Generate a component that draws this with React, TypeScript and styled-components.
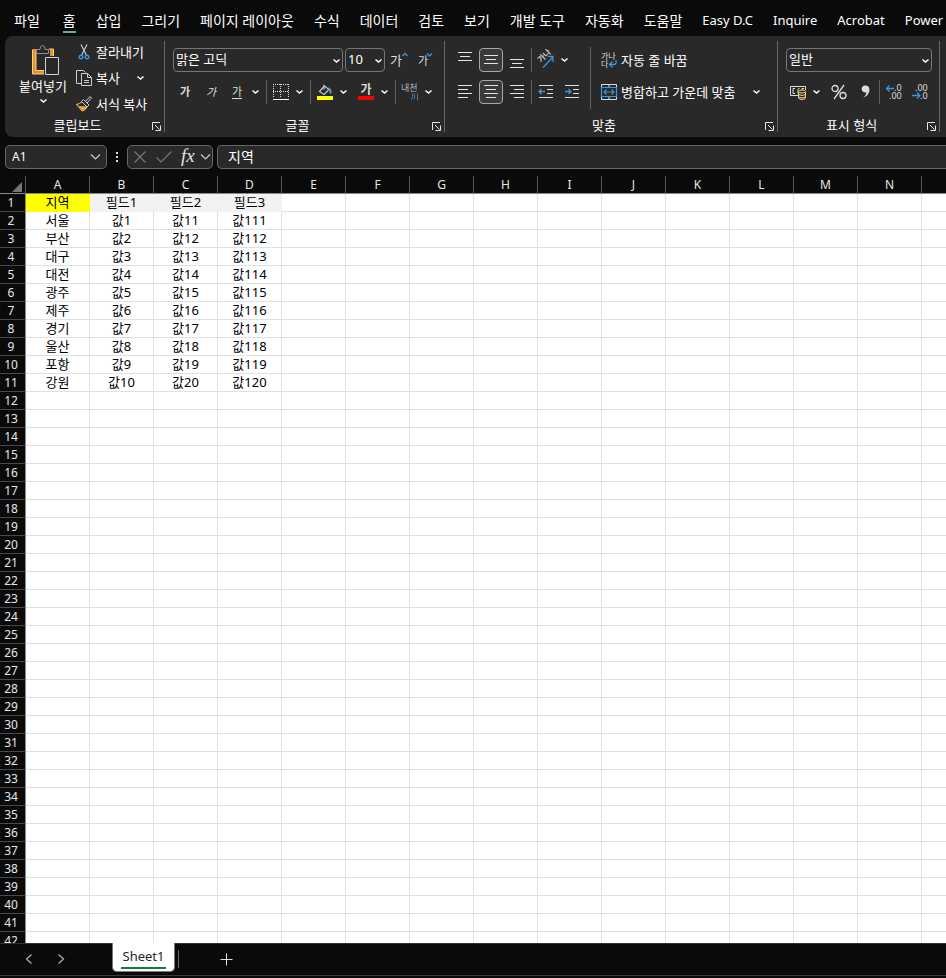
import React from "react";
import styled, { createGlobalStyle, css } from "styled-components";

const latin = '"Noto Sans", "Noto Sans CJK KR", sans-serif';

const GlobalStyle = createGlobalStyle`
  * { box-sizing: border-box; }
  body { margin: 0; background: #0a0a0a; }
  button, input, select { font: inherit; color: inherit; margin: 0; }
  svg { flex: none; overflow: visible; }
`;

const Window = styled.div`
  display: flex;
  flex-direction: column;
  height: 100vh;
  overflow: hidden;
  background: #0a0a0a;
  color: #fff;
  font-family: ${latin};
  font-size: 13px;
  line-height: 18px;
`;

/* ---------- Menu tabs ---------- */

const MenuBar = styled.nav`
  display: flex;
  flex: none;
  gap: 20px;
  height: 36px;
  padding: 10px 0 0 14px;
  overflow: hidden;
`;

const MenuTab = styled.button<{ $active?: boolean; $file?: boolean }>`
  flex: none;
  height: 23px;
  padding: 0;
  border: 0;
  border-bottom: 2px solid ${(p) => (p.$active ? "#5fb878" : "transparent")};
  background: none;
  font-size: ${(p) => (p.lang === "en" ? 13 : 14)}px;
  line-height: 21px;
  white-space: nowrap;
  margin-right: ${(p) => (p.$file ? 3 : 0)}px;
`;

/* ---------- Ribbon ---------- */

const Ribbon = styled.div`
  display: flex;
  flex: none;
  height: 101px;
  margin-left: 5px;
  padding: 5px 0;
  border-radius: 8px 0 0 8px;
  background: #292929;
`;

const Group = styled.section<{ $width: number }>`
  display: flex;
  flex: none;
  flex-direction: column;
  justify-content: space-between;
  width: ${(p) => p.$width}px;
  height: 91px;
  border-right: 1px solid #666;
`;

const GroupBody = styled.div<{ $left?: number }>`
  display: flex;
  padding-left: ${(p) => p.$left ?? 8}px;
`;

const GroupFooter = styled.footer`
  display: grid;
  grid-template-columns: 1fr 14px;
  align-items: center;
  height: 14px;
  font-size: 13px;
  line-height: 14px;
  text-align: center;
`;

const LaunchButton = styled.button`
  display: flex;
  padding: 3px 0 0 2px;
  border: 0;
  background: none;
`;

const Stack = styled.div<{ $top?: number; $gap?: number }>`
  display: flex;
  flex-direction: column;
  gap: ${(p) => p.$gap ?? 8}px;
  padding-top: ${(p) => p.$top ?? 7}px;
`;

const Tools = styled.div<{ $gap?: number; $height?: number }>`
  display: flex;
  align-items: center;
  gap: ${(p) => p.$gap ?? 0}px;
  height: ${(p) => p.$height ?? 24}px;
`;

const IconButton = styled.button<{ $pressed?: boolean }>`
  display: flex;
  flex: none;
  align-items: center;
  justify-content: center;
  width: 24px;
  height: 24px;
  padding: 0;
  border: 1px solid ${(p) => (p.$pressed ? "#a8a8a8" : "transparent")};
  border-radius: 4px;
  background: ${(p) => (p.$pressed ? "#3a3a3a" : "none")};
  color: #dcdcdc;
`;

const GlyphButton = styled(IconButton)<{ $kind?: "bold" | "italic" | "underline" }>`
  font-size: 11px;
  line-height: 14px;
  ${(p) => p.$kind === "bold" && css`font-weight: 700;`}
  ${(p) => p.$kind === "italic" && css`font-style: italic;`}
`;

const Underlined = styled.span`
  border-bottom: 1px solid #dcdcdc;
  line-height: 13px;
`;

const DropButton = styled.button<{ $width?: number }>`
  display: flex;
  flex: none;
  align-items: center;
  justify-content: center;
  width: ${(p) => p.$width ?? 12}px;
  height: 24px;
  padding: 0;
  border: 0;
  background: none;
`;

const Divider = styled.span<{ $left?: number; $right?: number; $height?: number }>`
  flex: none;
  width: 1px;
  height: ${(p) => p.$height ?? 24}px;
  margin: 0 ${(p) => p.$right ?? 2}px 0 ${(p) => p.$left ?? 5}px;
  background: #606060;
`;

const Spacer = styled.span`
  flex: none;
  width: 5px;
`;

const TextButton = styled.button<{ $height?: number }>`
  display: flex;
  align-items: center;
  gap: 4px;
  height: ${(p) => p.$height ?? 24}px;
  padding: 0;
  border: 0;
  background: none;
  font-size: 13px;
  white-space: nowrap;
`;

const PasteButton = styled.button`
  display: flex;
  flex-direction: column;
  align-items: center;
  width: 54px;
  margin-right: 6px;
  padding: 4px 0 0;
  border: 0;
  background: none;
  line-height: 20px;
  white-space: nowrap;
`;

const SelectFrame = styled.label<{ $width: number }>`
  position: relative;
  display: flex;
  width: ${(p) => p.$width}px;
  height: 24px;
  border: 1px solid #757575;
  border-radius: 4px;

  select {
    width: 100%;
    padding: 0 16px 2px 2px;
    border: 0;
    outline: 0;
    appearance: none;
    background: none;
    font-size: 13px;
  }
  svg {
    position: absolute;
    right: 2px;
    top: 9px;
    pointer-events: none;
  }
`;

/* ---------- Formula bar ---------- */

const FormulaBar = styled.div`
  display: flex;
  flex: none;
  height: 39px;
  padding: 8px 0 7px 5px;
`;

const Box = styled.div<{ $width?: number }>`
  display: flex;
  align-items: center;
  flex: none;
  width: ${(p) => p.$width}px;
  height: 24px;
  border: 1px solid #666;
  border-radius: 5px;
  background: #292929;

  input {
    flex: 1;
    min-width: 0;
    height: 22px;
    padding: 0 0 1px 6px;
    border: 0;
    outline: 0;
    background: none;
    font-size: 12px;
  }
`;

const FormulaBox = styled(Box)`
  flex: 1;
  width: auto;
  margin-left: 4px;
  border-right: 0;
  border-radius: 5px 0 0 5px;

  input {
    padding: 0 0 3px 10px;
    font-size: 14px;
  }
`;

const Dots = styled.span`
  display: flex;
  align-items: center;
  justify-content: center;
  width: 20px;
  height: 24px;
`;

/* ---------- Sheet ---------- */

const SheetArea = styled.main`
  flex: 1;
  min-height: 0;
  overflow: hidden;
  background: #fff;
`;

const Grid = styled.table`
  width: 986px;
  border-collapse: separate;
  border-spacing: 0;
  table-layout: fixed;
  color: #000;
  font-size: 13px;
  line-height: 17px;

  th, td {
    height: 18px;
    padding: 0;
    overflow: hidden;
    text-align: center;
    white-space: nowrap;
  }
  th {
    background: #0a0a0a;
    color: #e6e6e6;
    font-size: 12px;
    font-weight: 400;
  }
  th:first-child { width: 26px; }
`;

const ColumnHead = styled.th`
  border-right: 1px solid #555;
  border-bottom: 1px solid #8a8a8a;
`;

const Corner = styled(ColumnHead)`
  svg { display: block; margin: 4px 0 0 12px; }
`;

const RowHead = styled.th`
  border-right: 1px solid #8a8a8a;
  border-bottom: 1px solid #484848;

  span { margin-right: 3px; }
`;

const Cell = styled.td<{ $fill?: string }>`
  border-right: 1px solid ${(p) => p.$fill ?? "#e0e0e0"};
  border-bottom: 1px solid ${(p) => p.$fill ?? "#e0e0e0"};
  background: ${(p) => p.$fill ?? "#fff"};
`;

/* ---------- Sheet tabs ---------- */

const TabBar = styled.footer`
  display: flex;
  flex: none;
  height: 33px;
  border-top: 1px solid #333;
  border-bottom: 1px solid #3a3a3a;
  margin-bottom: 2px;
`;

const NavButton = styled.button<{ $width: number }>`
  display: flex;
  flex: none;
  align-items: center;
  justify-content: center;
  width: ${(p) => p.$width}px;
  height: 29px;
  padding: 0;
  border: 0;
  background: none;
`;

const SheetTab = styled.button`
  flex: none;
  width: 63px;
  height: 29px;
  margin: -1px 3px 0 48px;
  padding: 0 8px;
  border: 1px solid #777;
  border-top: 0;
  border-radius: 0 0 5px 5px;
  background: #fff;
  color: #262626;
  font-size: 13px;

  span {
    display: block;
    border-bottom: 2px solid #107c41;
    line-height: 21px;
  }
`;

const TabDivider = styled.span`
  width: 1px;
  height: 18px;
  margin-top: 6px;
  background: #666;
`;

/* ---------- Icons ---------- */

const Svg = ({ w = 16, h = 16, children }: { w?: number; h?: number; children: React.ReactNode }) => (
  <svg width={w} height={h} viewBox={`0 0 ${w} ${h}`} fill="none" stroke="#dcdcdc" strokeWidth="1" aria-hidden="true">
    {children}
  </svg>
);

const Chevron = () => (
  <Svg w={8} h={6}><path d="M1.500 1.500 4.500 4l3-2.500" stroke="#fff" strokeWidth="1.500" /></Svg>
);

const WideChevron = () => (
  <Svg w={12} h={8}><path d="M1 1.500 5.500 6 10 1.500" stroke="#ccc" strokeWidth="1.2" /></Svg>
);

const Launcher = () => (
  <Svg w={9} h={9}><path d="M.5 8V.5H8M3 3l4.500 4.500M8.500 3.500v5h-5" stroke="#e8e8e8" /></Svg>
);

const PasteIcon = () => (
  <Svg w={34} h={31}>
    <g transform="translate(6 0)">
      <path d="M7 5.500H2.500v22H13M18 5.500h1.500V11" stroke="#e8912d" strokeWidth="3" />
      <path d="M.5 4.500v24.500H13M17 4h4.500v7M4 7v18.500h9" stroke="#f7d48b" />
      <path d="M4.500 8.500v-4H8Q8 .5 10.500 .5T13 4.500h3.500v4z" stroke="#8f8f8f" fill="#292929" />
      <path d="M12 11h17v19H12z" fill="#292929" stroke="none" />
      <path d="M13.500 12.500h13v17h-13z" stroke="#d4d4d4" />
    </g>
  </Svg>
);

const CutIcon = () => (
  <Svg>
    <path d="M5 0.500 10.300 11M11 .500 5.700 11" stroke="#c8c8c8" strokeWidth="1.200" />
    <circle cx="5" cy="13" r="1.800" stroke="#3a96dd" strokeWidth="1.400" />
    <circle cx="11" cy="13" r="1.800" stroke="#3a96dd" strokeWidth="1.400" />
  </Svg>
);

const CopyIcon = () => (
  <Svg>
    <path d="M5.500 13.500h-5v-13h7l2 2M5.500 3.500h6l4 4v8h-10zM11.500 3.500v4h4M8 10.500h5M8 12.500h5" stroke="#cfcfcf" />
  </Svg>
);

const BrushIcon = () => (
  <Svg>
    <path d="M6 5.500Q4 8 .5 8.500l6 6.500q4-1.500 5-5z" stroke="#f7d48b" fill="#292929" />
    <path d="m2.500 10.500 8 .5q-1.500 3-4 4z" fill="#f0a23c" stroke="#f0a23c" />
    <path d="m9.500 5.500 4.500-5 1.500 1.500-4.500 5" stroke="#d0d0d0" fill="#292929" />
    <path d="m7.500 3.500 5.500 5.500-2 2L5.500 5.500z" stroke="#d0d0d0" fill="#292929" />
  </Svg>
);

const GrowIcon = ({ down }: { down?: boolean }) => (
  <Svg w={18} h={18}>
    <text x={down ? 2 : 0} y="14" fontSize={down ? 11 : 13} fill="#dcdcdc" stroke="none">가</text>
    <path d={down ? "m11 2.500 2.500 2.500L16 2.500" : "m12.500 5 2.500-2.500L17.500 5"} stroke="#3a96dd" strokeWidth="1.300" />
  </Svg>
);

const BordersIcon = () => (
  <Svg>
    <path d="M0 .5h16M.5 0v13M15.500 0v13M7.500 0v13M0 7.500h16" strokeDasharray="1 1" shapeRendering="crispEdges" />
    <path d="M0 15.500h16" stroke="#fff" shapeRendering="crispEdges" />
  </Svg>
);

const FillIcon = () => (
  <Svg>
    <path d="m7 2.500-4.500 5L7 10.500l5-5-5-4v4" stroke="#c8c8c8" strokeWidth="1.200" />
    <path d="M11 4.500c2 0 3 2 2.500 5" stroke="#5b9bd5" strokeWidth="2" />
    <path d="M0 12h16v4H0z" fill="#ff0" stroke="none" />
  </Svg>
);

const FontColorIcon = () => (
  <Svg>
    <text x="2.500" y="10" fontSize="12" fontWeight="700" fill="#dcdcdc" stroke="none">가</text>
    <path d="M0 12h16v4H0z" fill="red" stroke="none" />
  </Svg>
);

const PhoneticIcon = () => (
  <Svg w={18} h={18}>
    <text x="0" y="8" fontSize="9" fill="#b8b8b8" stroke="none">내천</text>
    <path d="M11.500 10.500v3l-1 3.500M13.500 10.500V16M16.500 10.500v7" stroke="#3a7cb0" />
  </Svg>
);

const alignPaths: Record<string, string> = {
  top: "M1 .5h14M3 4.500h10M1 8.500h14",
  middle: "M1 3.500h14M3 7.500h10M1 11.500h14",
  bottom: "M1 7.500h14M3 11.500h10M1 15.500h14",
  left: "M1 1.500h14M1 5.500h10M1 9.500h14M1 13.500h10",
  center: "M1 1.500h14M3 5.500h10M1 9.500h14M3 13.500h10",
  right: "M1 1.500h14M5 5.500h10M1 9.500h14M5 13.500h10",
};

const AlignIcon = ({ kind }: { kind: string }) => (
  <Svg><path d={alignPaths[kind]} stroke="#e4e4e4" /></Svg>
);

const IndentIcon = ({ out }: { out?: boolean }) => (
  <Svg>
    <path d="M1 1.500h14M9 5.500h6M9 9.500h6M1 13.500h14" />
    <path d={out ? "M7 7.500H1M3.500 5 1 7.500 3.500 10" : "M1 7.500h6M4.500 5 7 7.500 4.500 10"} stroke="#3a96dd" strokeWidth="1.300" />
  </Svg>
);

const OrientationIcon = () => (
  <Svg w={18} h={18}>
    <text x="0" y="0" fontSize="8" fontWeight="700" fill="#c8c8c8" stroke="none" transform="translate(4 12) rotate(-45)">가나</text>
    <path d="M6 16.500 16 6M11 5.500h5V11" stroke="#3a96dd" strokeWidth="1.300" />
  </Svg>
);

const WrapIcon = () => (
  <Svg>
    <text x="0" y="7" fontSize="8" fill="#dcdcdc" stroke="none">가나</text>
    <text x="0" y="15" fontSize="8" fill="#dcdcdc" stroke="none">다</text>
    <path d="M15 8v2.500q0 2-2 2H8.500M11.500 9.500l-3 3 3 3" stroke="#3a96dd" strokeWidth="1.300" />
  </Svg>
);

const MergeIcon = () => (
  <Svg>
    <path d="M.5 .5h15v15H.5zM8 .5v3M8 12.500v3" />
    <path d="M.5 3.500h15v9H.5zM3 8h10M5.500 5.500 3 8l2.500 2.500M10.500 5.500 13 8l-2.500 2.500" stroke="#3a96dd" strokeWidth="1.200" />
  </Svg>
);

const CurrencyIcon = () => (
  <Svg>
    <path d="M8 11.500H.5v-9h15V6" />
    <path d="M5 4.500H3v5h2M8 9V5.500q0-1 1.500-1M12 6V4.500h2" />
    <path d="M8.500 7.500v6q0 2 3.500 2t3.500-2v-6M8.500 10.500q3.500 2 7 0M8.500 13q3.500 2 7 0" stroke="#f7d48b" fill="#292929" />
    <ellipse cx="12" cy="7.500" rx="3.500" ry="1.500" stroke="#f7d48b" fill="#292929" />
  </Svg>
);

const PercentIcon = () => (
  <Svg>
    <circle cx="4" cy="4.500" r="3" strokeWidth="1.300" />
    <circle cx="12" cy="11.500" r="3" strokeWidth="1.300" />
    <path d="M13 1 3 15" strokeWidth="1.300" />
  </Svg>
);

const CommaIcon = () => (
  <Svg>
    <path d="M8.500 1.500a3.500 3.500 0 1 0 1 6.700Q9 12 5.500 14q7-2.500 7-8.500Q12 1.500 8.500 1.500z" fill="#dcdcdc" stroke="none" />
  </Svg>
);

const DecimalIcon = ({ less }: { less?: boolean }) => (
  <Svg w={18} h={16}>
    <text x={less ? 4 : 9} y="7" fontSize="9" fill="#dcdcdc" stroke="none">{less ? ".00" : ".0"}</text>
    <text x={less ? 9 : 4} y="15" fontSize="9" fill="#dcdcdc" stroke="none">{less ? ".0" : ".00"}</text>
    <path d={less ? "M1 11.500h8M6 8.500l3 3-3 3" : "M9 4.500H1.500M4.500 1.500l-3 3 3 3"} stroke="#3a96dd" strokeWidth="1.300" />
  </Svg>
);

/* ---------- Data ---------- */

const koreanTabs = ["파일", "홈", "삽입", "그리기", "페이지 레이아웃", "수식", "데이터", "검토", "보기", "개발 도구", "자동화", "도움말"];
const englishTabs = ["Easy D.C", "Inquire", "Acrobat", "Power"];
const columns = "ABCDEFGHIJKLMNO".split("");
const regions = ["서울", "부산", "대구", "대전", "광주", "제주", "경기", "울산", "포항", "강원"];
const data: string[][] = [
  ["지역", "필드1", "필드2", "필드3"],
  ...regions.map((name, i) => [name, `값${i + 1}`, `값${i + 11}`, `값${i + 111}`]),
];
const rowCount = 42;

const fillFor = (row: number, col: number) => {
  if (row > 0 || col > 3) return undefined;
  return col === 0 ? "#ffff00" : "#f2f2f2";
};

const Split = ({ label, children }: { label: string; children: React.ReactNode }) => (
  <>
    {children}
    <DropButton aria-label={`${label} 옵션`}><Chevron /></DropButton>
  </>
);

const Footer = ({ title }: { title: string }) => (
  <GroupFooter>
    <span>{title}</span>
    <LaunchButton aria-label={`${title} 설정`}><Launcher /></LaunchButton>
  </GroupFooter>
);

const Picker = ({ label, value, width }: { label: string; value: string; width: number }) => (
  <SelectFrame $width={width}>
    <select aria-label={label}><option>{value}</option></select>
    <Chevron />
  </SelectFrame>
);

export default function App() {
  return (
    <Window>
      <GlobalStyle />
      <MenuBar>
        {koreanTabs.map((t) => (
          <MenuTab key={t} $active={t === "홈"} $file={t === "파일"}>{t}</MenuTab>
        ))}
        {englishTabs.map((t) => <MenuTab key={t} lang="en">{t}</MenuTab>)}
      </MenuBar>

      <Ribbon>
        <Group $width={160}>
          <GroupBody $left={11}>
            <PasteButton>
              <PasteIcon />
              <span>붙여넣기</span>
              <Stack $top={2}><Chevron /></Stack>
            </PasteButton>
            <Stack $top={0} $gap={4}>
              <TextButton $height={22}><CutIcon />잘라내기</TextButton>
              <Tools $height={22}>
                <TextButton><CopyIcon />복사</TextButton>
                <DropButton $width={40} aria-label="복사 옵션"><Chevron /></DropButton>
              </Tools>
              <TextButton $height={22}><BrushIcon />서식 복사</TextButton>
            </Stack>
          </GroupBody>
          <Footer title="클립보드" />
        </Group>

        <Group $width={280}>
          <GroupBody>
            <Stack>
              <Tools $gap={2}>
                <Picker label="글꼴" value="맑은 고딕" width={170} />
                <Picker label="글꼴 크기" value="10" width={40} />
                <IconButton aria-label="글꼴 크기 크게"><GrowIcon /></IconButton>
                <IconButton aria-label="글꼴 크기 작게"><GrowIcon down /></IconButton>
              </Tools>
              <Tools>
                <Tools $gap={2}>
                  <GlyphButton $kind="bold">가</GlyphButton>
                  <GlyphButton $kind="italic">가</GlyphButton>
                  <GlyphButton $kind="underline"><Underlined>가</Underlined></GlyphButton>
                </Tools>
                <DropButton aria-label="밑줄 옵션"><Chevron /></DropButton>
                <Divider />
                <Split label="테두리"><IconButton aria-label="테두리"><BordersIcon /></IconButton></Split>
                <Divider />
                <Split label="채우기 색"><IconButton aria-label="채우기 색"><FillIcon /></IconButton></Split>
                <Spacer />
                <Split label="글꼴 색"><IconButton aria-label="글꼴 색"><FontColorIcon /></IconButton></Split>
                <Divider />
                <Split label="윗주"><IconButton aria-label="윗주"><PhoneticIcon /></IconButton></Split>
              </Tools>
            </Stack>
          </GroupBody>
          <Footer title="글꼴" />
        </Group>

        <Group $width={333}>
          <GroupBody>
            <Stack>
              <Tools>
                <Tools $gap={2}>
                  <IconButton aria-label="위쪽 맞춤"><AlignIcon kind="top" /></IconButton>
                  <IconButton aria-label="가운데 맞춤" $pressed><AlignIcon kind="middle" /></IconButton>
                  <IconButton aria-label="아래쪽 맞춤"><AlignIcon kind="bottom" /></IconButton>
                </Tools>
                <Divider $left={2} />
                <Split label="방향"><IconButton aria-label="방향"><OrientationIcon /></IconButton></Split>
              </Tools>
              <Tools>
                <Tools $gap={2}>
                  <IconButton aria-label="왼쪽 맞춤"><AlignIcon kind="left" /></IconButton>
                  <IconButton aria-label="가로 가운데 맞춤" $pressed><AlignIcon kind="center" /></IconButton>
                  <IconButton aria-label="오른쪽 맞춤"><AlignIcon kind="right" /></IconButton>
                </Tools>
                <Divider $left={2} />
                <Tools $gap={2}>
                  <IconButton aria-label="내어쓰기"><IndentIcon out /></IconButton>
                  <IconButton aria-label="들여쓰기"><IndentIcon /></IconButton>
                </Tools>
              </Tools>
            </Stack>
            <Stack $top={6}><Divider $left={6} $right={10} $height={62} /></Stack>
            <Stack>
              <TextButton><WrapIcon />자동 줄 바꿈</TextButton>
              <Tools>
                <TextButton><MergeIcon />병합하고 가운데 맞춤</TextButton>
                <DropButton $width={42} aria-label="병합 옵션"><Chevron /></DropButton>
              </Tools>
            </Stack>
          </GroupBody>
          <Footer title="맞춤" />
        </Group>

        <Group $width={162}>
          <GroupBody>
            <Stack>
              <Picker label="표시 형식" value="일반" width={146} />
              <Tools>
                <Split label="회계"><IconButton aria-label="회계 표시 형식"><CurrencyIcon /></IconButton></Split>
                <Spacer />
                <Tools $gap={2}>
                  <IconButton aria-label="백분율"><PercentIcon /></IconButton>
                  <IconButton aria-label="쉼표 스타일"><CommaIcon /></IconButton>
                </Tools>
                <Divider $left={2} />
                <Tools $gap={2}>
                  <IconButton aria-label="자릿수 늘림"><DecimalIcon /></IconButton>
                  <IconButton aria-label="자릿수 줄임"><DecimalIcon less /></IconButton>
                </Tools>
              </Tools>
            </Stack>
          </GroupBody>
          <Footer title="표시 형식" />
        </Group>
      </Ribbon>

      <FormulaBar>
        <Box $width={102}>
          <input aria-label="이름 상자" defaultValue="A1" />
          <DropButton $width={20} aria-label="이름 목록"><WideChevron /></DropButton>
        </Box>
        <Dots>
          <Svg w={4} h={12}><path d="M1 1h2v2H1zM1 5h2v2H1zM1 9h2v2H1z" fill="#dcdcdc" stroke="none" /></Svg>
        </Dots>
        <Box $width={86}>
          <DropButton $width={24} aria-label="취소"><Svg w={14} h={14}><path d="m1.500 1.500 11 11m0-11-11 11" stroke="#777" strokeWidth="1.200" /></Svg></DropButton>
          <DropButton $width={24} aria-label="입력"><Svg><path d="m.5 8.500 4.500 4.500L15.500 2.500" stroke="#777" strokeWidth="1.200" /></Svg></DropButton>
          <DropButton $width={24} aria-label="함수 삽입">
            <Svg w={18} h={18}><text x="2" y="14" fontSize="19" fontStyle="italic" fontFamily='"Liberation Serif", serif' fill="#e4e4e4" stroke="none">fx</text></Svg>
          </DropButton>
          <DropButton aria-label="함수 목록"><WideChevron /></DropButton>
        </Box>
        <FormulaBox><input aria-label="수식 입력줄" defaultValue="지역" /></FormulaBox>
      </FormulaBar>

      <SheetArea>
        <Grid>
          <thead>
            <tr>
              <Corner scope="col" aria-label="모두 선택"><Svg w={10} h={10}><path d="M10 0v10H0z" fill="#777" stroke="none" /></Svg></Corner>
              {columns.map((c) => <ColumnHead key={c} scope="col">{c}</ColumnHead>)}
            </tr>
          </thead>
          <tbody>
            {Array.from({ length: rowCount }, (_, r) => (
              <tr key={r}>
                <RowHead scope="row"><span>{r + 1}</span></RowHead>
                {columns.map((c, i) => <Cell key={c} $fill={fillFor(r, i)}>{data[r]?.[i]}</Cell>)}
              </tr>
            ))}
          </tbody>
        </Grid>
      </SheetArea>

      <TabBar>
        <NavButton $width={58} aria-label="이전 시트"><Svg w={8} h={10}><path d="M6.500 .5 1.500 5l5 4.500" stroke="#aaa" strokeWidth="1.300" /></Svg></NavButton>
        <NavButton $width={6} aria-label="다음 시트"><Svg w={6} h={10}><path d="M.5 .5l5 4.500-5 4.500" stroke="#aaa" strokeWidth="1.300" /></Svg></NavButton>
        <SheetTab><span>Sheet1</span></SheetTab>
        <TabDivider />
        <NavButton $width={94} aria-label="새 시트"><Svg w={12} h={12}><path d="M6.500 .5v12M.5 6.500h12" stroke="#e0e0e0" strokeWidth="1" /></Svg></NavButton>
      </TabBar>
    </Window>
  );
}
